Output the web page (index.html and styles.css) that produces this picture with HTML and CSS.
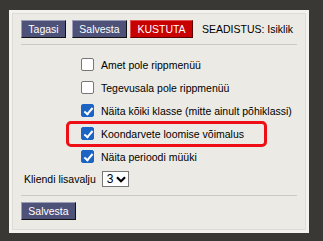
FILE: index.html
```html
<!DOCTYPE html>
<html lang="et">
<head>
    <meta charset="UTF-8">
    <title>Seadistus</title>
    <link rel="stylesheet" href="styles.css">
</head>
<body>
    <div class="panel">
        <div class="box">
            <div class="toolbar">
                <button class="btn btn-back">Tagasi</button>
                <button class="btn btn-save">Salvesta</button>
                <button class="btn btn-delete">KUSTUTA</button>
                <span class="setting">SEADISTUS: Isiklik</span>
            </div>

            <div class="options">
                <label class="option">
                    <input type="checkbox">
                    <span>Amet pole rippmenüü</span>
                </label>
                <label class="option">
                    <input type="checkbox">
                    <span>Tegevusala pole rippmenüü</span>
                </label>
                <label class="option">
                    <input type="checkbox" checked>
                    <span>Näita kõiki klasse (mitte ainult põhiklassi)</span>
                </label>
                <label class="option highlighted">
                    <input type="checkbox" checked>
                    <span>Koondarvete loomise võimalus</span>
                    <span class="marker"></span>
                </label>
                <label class="option">
                    <input type="checkbox" checked>
                    <span>Näita perioodi müüki</span>
                </label>
            </div>

            <div class="extra">
                <span>Kliendi lisavalju</span>
                <span class="select">3
                    <svg width="10" height="7" viewBox="0 0 10 7">
                        <path d="M1 1.2 L5 5.2 L9 1.2" fill="none" stroke="#000" stroke-width="2.2"/>
                    </svg>
                </span>
            </div>

            <div class="footer">
                <button class="btn btn-save">Salvesta</button>
            </div>
        </div>
    </div>
</body>
</html>
```

FILE: styles.css
```css
* {
    margin: 0;
    padding: 0;
    box-sizing: border-box;
}

body {
    background: #3a3835;
    font-family: "Liberation Sans", Arial, sans-serif;
    font-size: 10.5px;
    color: #000;
}

.panel {
    margin: 10px 0 0 9px;
    width: 300px;
    height: 223px;
    padding: 3px;
    background: #f3f2ee;
}

.box {
    height: 100%;
    border: 1px solid #dedcd7;
    background: #ebeae5;
    padding: 6px 8px 0 8px;
}

.toolbar {
    display: flex;
    align-items: center;
    height: 18px;
    margin-bottom: 6px;
}

.btn {
    height: 18px;
    font-family: inherit;
    font-size: 10.5px;
    color: #fff;
    background: #4e5178;
    border: 1px solid #111;
    border-top-color: #9a9cb8;
    border-left-color: #9a9cb8;
    padding: 0 6px;
    cursor: pointer;
}

.btn-back {
    width: 45px;
}

.toolbar .btn-save {
    width: 55px;
    margin-left: 6px;
}

.btn-delete {
    width: 63px;
    margin-left: 3px;
    background: #c80000;
    border-color: #5a0000;
    border-top-color: #e05050;
    border-left-color: #e05050;
}

.setting {
    margin-left: 9px;
}

.options {
    border-top: 1px solid #cac9c4;
    padding: 8px 0 0 60px;
}

.option {
    position: relative;
    display: flex;
    align-items: center;
    height: 23px;
}

.option input {
    appearance: none;
    width: 13px;
    height: 13px;
    margin-right: 7px;
    border: 1px solid #777;
    border-radius: 2px;
    background: #fff;
    position: relative;
}

.option input:checked {
    background: #1b64c4;
    border-color: #1b64c4;
}

.option input:checked::after {
    content: "";
    position: absolute;
    left: 3.5px;
    top: 0.5px;
    width: 3px;
    height: 7px;
    border: solid #fff;
    border-width: 0 2px 2px 0;
    transform: rotate(40deg);
}

.marker {
    position: absolute;
    left: -15px;
    top: -1px;
    width: 201px;
    height: 26px;
    border: 3px solid #ee0e16;
    border-radius: 5px;
}

.extra {
    display: flex;
    align-items: center;
    height: 22px;
    padding-left: 3px;
    margin-bottom: 5px;
}

.select {
    display: flex;
    align-items: center;
    gap: 3px;
    margin-left: 6px;
    height: 16px;
    width: 27px;
    padding-left: 4px;
    border: 1px solid #777;
    background: #fff;
    font-size: 12px;
}

.footer {
    border-top: 1px solid #cac9c4;
    padding-top: 6px;
}

.footer .btn-save {
    width: 55px;
}
```
